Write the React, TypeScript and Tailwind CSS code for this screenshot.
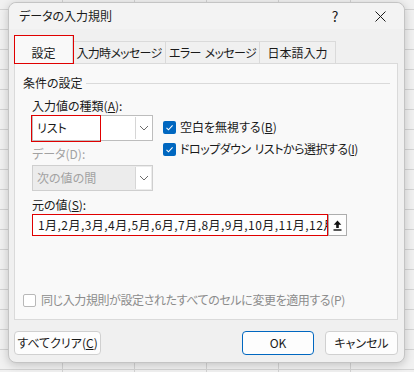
import React from 'react';

function Chevron() {
  return (
    <svg width="10" height="6" viewBox="0 0 10 6" fill="none">
      <path d="M1 1l4 4 4-4" stroke="#6b6b6b" strokeWidth="1" />
    </svg>
  );
}

function Checked() {
  return (
    <span className="w-[13px] h-[13px] rounded-[2px] bg-[#0067c0] flex items-center justify-center flex-shrink-0">
      <svg width="9" height="9" viewBox="0 0 9 9" fill="none">
        <path d="M1.5 4.8l2 2L7.6 2.4" stroke="#ffffff" strokeWidth="1.1" />
      </svg>
    </span>
  );
}

function Gap() {
  return <span className="inline-block w-[4px]" />;
}

function Combo({ value, disabled, outlined }: { value: string; disabled?: boolean; outlined?: boolean }) {
  return (
    <div className={`relative flex w-[121px] h-[26px] border ${disabled ? 'border-[#cfcfcf] bg-[#ececec]' : 'border-[#bdbdbd] bg-white'}`}>
      <div className={`flex-1 flex items-center pl-[4px] ${disabled ? 'text-[#a2a2a2]' : 'text-[#1a1a1a]'}`}>{value}</div>
      <div className="w-[16px] m-[1px] bg-white border-l border-[#d6d6d6] flex items-center justify-center">
        <Chevron />
      </div>
      {outlined && <div className="absolute left-[-2px] top-[-1px] w-[70px] h-[27px] border border-[#e00000]" />}
    </div>
  );
}

function Button({ label, primary, width }: { label: React.ReactNode; primary?: boolean; width: string }) {
  return (
    <div className={`${width} h-[24px] rounded-[4px] bg-[#fdfdfd] border flex items-center justify-center text-[#1a1a1a] ${primary ? 'border-[#0067c0]' : 'border-[#d0d0d0]'}`}>
      {label}
    </div>
  );
}

export default function App() {
  return (
    <div className="w-[414px] h-[372px] overflow-hidden bg-[#f1f1f1] bg-[linear-gradient(to_right,#d3d3d3_1px,transparent_1px),linear-gradient(to_bottom,#d3d3d3_1px,transparent_1px)] bg-[size:72px_20px] bg-[position:62px_9px] pt-[2px] pl-[8px] font-['Noto_Sans_CJK_JP',sans-serif] [font-feature-settings:'palt'] text-[12px] leading-[16px] text-[#1a1a1a]">
      <div className="w-[397px] h-[361px] rounded-[8px] border border-[#c4c4c4] bg-[#f0f0f0] shadow-[0_2px_10px_rgba(0,0,0,0.2)] flex flex-col">
        {/* title bar */}
        <div className="h-[26px] flex items-center rounded-t-[8px] bg-[#f3f3f3]">
          <div className="pl-[10px] flex-1">データの入力規則</div>
          <div className="w-[46px] h-full flex items-center justify-center text-[14px]">?</div>
          <div className="w-[46px] h-full flex items-center justify-center pr-[2px]">
            <svg width="11" height="11" viewBox="0 0 11 11">
              <path d="M0.5 0.5l10 10M10.5 0.5l-10 10" stroke="#1a1a1a" strokeWidth="1" />
            </svg>
          </div>
        </div>

        <div className="pl-[5px] pr-[6px] pt-[6px]">
          {/* tabs */}
          <div className="flex items-end h-[28px] tracking-[-0.7px]">
            <div className="relative w-[59px] h-[28px] bg-[#f9f9f9] border border-b-0 border-[#dadada] flex items-center justify-center pt-[6px] tracking-normal">
              設定
              <div className="absolute left-[-1px] top-[-1px] w-[60px] h-[29px] border border-[#e00000]" />
            </div>
            <div className="w-[93px] h-[22px] border-t border-r border-[#dadada] flex items-center justify-center">入力時メッセージ</div>
            <div className="w-[94px] h-[22px] border-t border-r border-[#dadada] flex items-center justify-center">エラー<Gap />メッセージ</div>
            <div className="w-[76px] h-[22px] border-t border-r border-[#dadada] flex items-center justify-center tracking-normal">日本語入力</div>
          </div>

          {/* panel */}
          <div className="h-[257px] bg-[#f9f9f9] border border-[#dadada] pl-[8px] pr-[7px] pt-[11px] flex flex-col">
            <div className="flex items-center gap-[3px]">
              <span>条件の設定</span>
              <div className="flex-1 h-px bg-[#dadada] mt-[1px]" />
            </div>

            <div className="pl-[9px]">
              <div className="flex gap-[10px] mt-[7px]">
                <div className="flex flex-col">
                  <div className="h-[16px]">入力値の種類(<span className="underline">A</span>):</div>
                  <div className="mt-[1px]">
                    <Combo value="リスト" outlined />
                  </div>
                  <div className="h-[16px] mt-[5px] text-[#a2a2a2]">データ(D):</div>
                  <div className="mt-[3px]">
                    <Combo value="次の値の間" disabled />
                  </div>
                </div>
                <div className="flex flex-col gap-[6px] pt-[21px]">
                  <div className="flex items-center gap-[4px] h-[16px]">
                    <Checked />
                    <span>空白を無視する(<span className="underline">B</span>)</span>
                  </div>
                  <div className="flex items-center gap-[4px] h-[16px]">
                    <Checked />
                    <span className="tracking-[-0.5px]">ドロップダウン<Gap />リストから選択する(<span className="underline">I</span>)</span>
                  </div>
                </div>
              </div>

              <div className="h-[16px] mt-[6px]">元の値(<span className="underline">S</span>):</div>
              <div className="flex mt-[1px]">
                <div className="w-[296px] h-[22px] border border-[#e00000] bg-white flex items-center pl-[5px] overflow-hidden whitespace-nowrap tracking-[0.45px]">
                  1月,2月,3月,4月,5月,6月,7月,8月,9月,10月,11月,12月
                </div>
                <div className="w-[19px] h-[22px] border border-[#adadad] bg-[#fdfdfd] flex items-center justify-center">
                  <svg width="9" height="11" viewBox="0 0 9 11">
                    <path d="M4.5 0.5L8.3 4.8H5.8V8H3.2V4.8H0.7Z" fill="#111111" />
                    <rect x="0.5" y="9.3" width="8" height="1.4" fill="#111111" />
                  </svg>
                </div>
              </div>
            </div>

            <div className="flex-1" />
            <div className="flex items-center gap-[5px] mb-[11px]">
              <span className="w-[13px] h-[13px] rounded-[2px] border border-[#b8b8b8] bg-white" />
              <span className="text-[#8c8c8c] tracking-[-0.4px]">同じ入力規則が設定されたすべてのセルに変更を適用する(P)</span>
            </div>
          </div>

          {/* buttons */}
          <div className="flex items-center mt-[11px]">
            <Button width="w-[87px]" label={<span>すべてクリア(<span className="underline">C</span>)</span>} />
            <div className="flex-1" />
            <Button width="w-[72px]" primary label="OK" />
            <div className="w-[11px]" />
            <Button width="w-[73px]" label="キャンセル" />
          </div>
        </div>
      </div>
    </div>
  );
}
